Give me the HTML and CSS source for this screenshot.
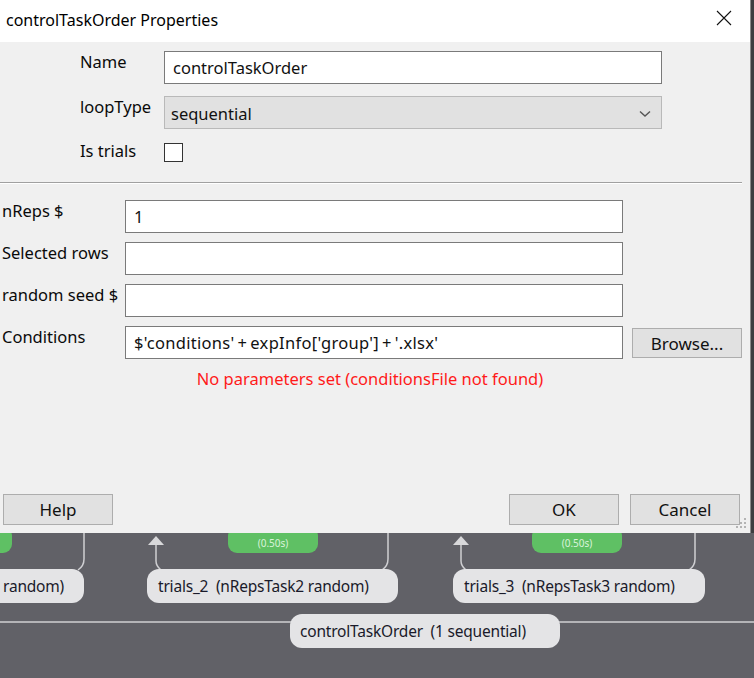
FILE: index.html
```html
<!DOCTYPE html>
<html>
<head>
<meta charset="utf-8">
<link rel="stylesheet" href="styles.css">
</head>
<body>
<div class="screen">
  <div class="dialog">
    <div class="titlebar">
      <span class="title">controlTaskOrder Properties</span>
      <svg class="close" width="16" height="16" viewBox="0 0 16 16"><path d="M1 1 L15 15 M15 1 L1 15" stroke="#111" stroke-width="1.1" fill="none"/></svg>
    </div>
    <div class="body">
      <div class="top-grid">
        <label class="lbl">Name</label>
        <div class="field input">controlTaskOrder</div>
        <label class="lbl">loopType</label>
        <div class="field select">
          <span>sequential</span>
          <svg width="12" height="8" viewBox="0 0 12 8"><path d="M1 1.5 L6 6 L11 1.5" stroke="#555" stroke-width="1.4" fill="none"/></svg>
        </div>
        <label class="lbl lbl-check">Is trials</label>
        <div class="check-cell"><span class="checkbox"></span></div>
      </div>
      <div class="separator"></div>
      <div class="bottom-grid">
        <label class="lbl">nReps $</label>
        <div class="field input">1</div>
        <div></div>
        <label class="lbl">Selected rows</label>
        <div class="field input"></div>
        <div></div>
        <label class="lbl">random seed $</label>
        <div class="field input"></div>
        <div></div>
        <label class="lbl">Conditions</label>
        <div class="field input code">$'conditions'<span class="plus">+</span>expInfo['group']<span class="plus">+</span>'.xlsx'</div>
        <button class="btn browse">Browse...</button>
      </div>
      <div class="error">No parameters set (conditionsFile not found)</div>
      <div class="buttons">
        <button class="btn">Help</button>
        <div class="spacer"></div>
        <button class="btn">OK</button>
        <button class="btn">Cancel</button>
      </div>
      <svg class="grip" width="12" height="12" viewBox="0 0 12 12">
        <g fill="#b4b4b4">
          <rect x="9" y="0" width="2" height="2"/>
          <rect x="5" y="4" width="2" height="2"/><rect x="9" y="4" width="2" height="2"/>
          <rect x="1" y="8" width="2" height="2"/><rect x="5" y="8" width="2" height="2"/><rect x="9" y="8" width="2" height="2"/>
        </g>
      </svg>
    </div>
  </div>
  <div class="canvas">
    <svg class="wires" width="754" height="145" viewBox="0 0 754 145">
      <g stroke="#cfcfd2" stroke-width="1.5" fill="none">
        <path d="M84 0 V26 Q84 33 78 37"/>
        <path d="M156 10 V28 Q156 33 161 37"/>
        <path d="M388 0 V26 Q388 33 382 37"/>
        <path d="M461 10 V28 Q461 33 466 37"/>
        <path d="M695 0 V26 Q695 33 689 37"/>
        <path d="M0 89 H292 M558 89 H754"/>
      </g>
      <g fill="#d8d8da">
        <path d="M148 12 L164 12 L156 3 Z"/>
        <path d="M453 12 L469 12 L461 3 Z"/>
      </g>
    </svg>
    <div class="routine r1"></div>
    <div class="routine r2">(0.50s)</div>
    <div class="routine r3">(0.50s)</div>
    <div class="loop l1">random)</div>
    <div class="loop l2">trials_2&nbsp; (nRepsTask2 random)</div>
    <div class="loop l3">trials_3&nbsp; (nRepsTask3 random)</div>
    <div class="loop l4">controlTaskOrder&nbsp; (1 sequential)</div>
  </div>
</div>
</body>
</html>
```

FILE: styles.css
```css
* { box-sizing: border-box; }
html, body { margin: 0; padding: 0; }
body {
  width: 754px;
  height: 678px;
  overflow: hidden;
  background: #616167;
  font-family: "Noto Sans", "Open Sans", sans-serif;
  color: #111;
}
.screen {
  display: flex;
  flex-direction: column;
  width: 754px;
  height: 678px;
  background: #3d3d40;
}
.dialog {
  width: 751px;
  height: 533px;
  border-right: 1px solid #8a8a8a;
  display: flex;
  flex-direction: column;
  flex: none;
}
.titlebar {
  height: 42px;
  background: #fff;
  display: flex;
  align-items: center;
  padding: 0 18px 2px 6px;
  flex: none;
}
.title {
  font-size: 16px;
  flex: 1;
  color: #000;
}
.close { display: block; margin-top: -4px; }
.body {
  flex: 1;
  background: #f0f0f0;
  position: relative;
  display: flex;
  flex-direction: column;
}
.lbl {
  font-size: 16.5px;
  line-height: 20px;
  color: #0a0a0a;
  white-space: nowrap;
}
.top-grid {
  display: grid;
  grid-template-columns: 84px 498px;
  column-gap: 0;
  row-gap: 12px;
  padding: 9px 0 0 80px;
  align-items: start;
}
.top-grid .lbl { padding-top: 1px; }
.field {
  height: 33px;
  border: 1px solid #7a7a7a;
  background: #fff;
  font-size: 16.5px;
  padding: 0 8px;
  display: flex;
  align-items: center;
  white-space: nowrap;
  overflow: hidden;
}
.code { letter-spacing: 0.3px; }
.plus { margin: 0 3px; }
.select {
  background: #e1e1e1;
  border-color: #b9b9b9;
  justify-content: space-between;
  padding: 2px 8px 0 6px;
}
.select svg { margin-right: 2px; }
.check-cell { height: 20px; padding-top: 2px; }
.lbl-check { padding-top: 0 !important; }
.checkbox {
  display: block;
  width: 19px;
  height: 19px;
  border: 1px solid #333;
  background: #fff;
}
.separator {
  margin-top: 21px;
  width: 742px;
  height: 2px;
  border-top: 1px solid #a0a0a0;
  border-bottom: 1px solid #fff;
}
.bottom-grid {
  display: grid;
  grid-template-columns: 123px 498px 119px;
  row-gap: 9px;
  padding: 16px 0 0 2px;
  align-items: start;
}
.bottom-grid .lbl { padding-top: 1px; }
.btn {
  font-family: inherit;
  font-size: 17px;
  color: #111;
  background: #e1e1e1;
  border: 1px solid #adadad;
  width: 110px;
  height: 31px;
  padding: 0;
  margin: 0;
}
.browse {
  margin: 2px 0 0 9px;
  height: 30px;
}
.error {
  color: #ff1a1a;
  font-size: 16.5px;
  text-align: center;
  width: 740px;
  margin-top: 8px;
}
.buttons {
  margin-top: auto;
  margin-bottom: 8px;
  display: flex;
  gap: 11px;
  padding: 0 0 0 3px;
  width: 740px;
}
.spacer { flex: 1; }
.grip { position: absolute; right: 3px; bottom: 3px; }
.canvas {
  flex: 1;
  position: relative;
  background: #616167;
  overflow: hidden;
}
.wires { position: absolute; left: 0; top: 0; }
.routine {
  position: absolute;
  top: -6px;
  height: 26px;
  background: #5fc064;
  border-radius: 9px;
  color: #d9f3da;
  font-size: 10px;
  text-align: center;
  padding-top: 10px;
  line-height: 12px;
}
.r1 { left: -40px; width: 52px; }
.r2 { left: 228px; width: 90px; }
.r3 { left: 532px; width: 90px; }
.loop {
  position: absolute;
  height: 34px;
  background: #e4e4e6;
  border-radius: 12px;
  font-size: 15.5px;
  line-height: 34px;
  color: #1a1a2a;
  letter-spacing: -0.2px;
  white-space: nowrap;
  padding-left: 11px;
}
.l1 { left: -30px; width: 114px; top: 36px; padding-left: 33px; }
.l2 { left: 147px; width: 251px; top: 36px; }
.l3 { left: 453px; width: 252px; top: 36px; }
.l4 { left: 290px; width: 270px; top: 81px; padding-left: 10px; }
```
